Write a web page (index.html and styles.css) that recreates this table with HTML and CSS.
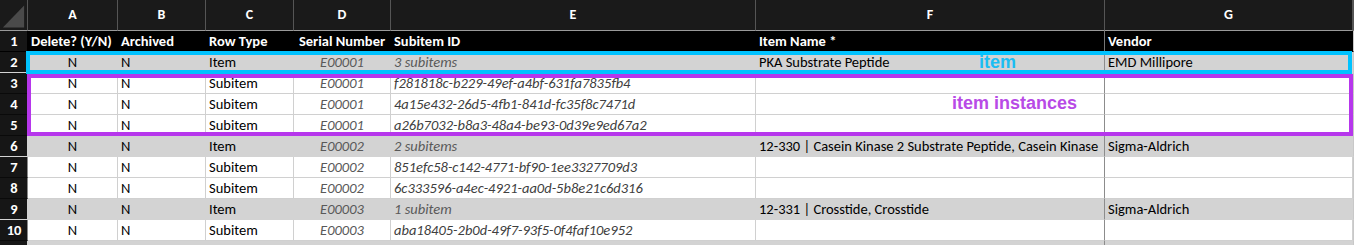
FILE: index.html
```html
<!DOCTYPE html>
<html lang="en">
<head>
<meta charset="utf-8">
<title>Sheet</title>
<link rel="stylesheet" href="styles.css">
</head>
<body>
<div class="sheet">
  <div class="row colhead">
    <div class="corner"><svg width="28" height="31" viewBox="0 0 28 31"><polygon points="3,28 25,28 25,5" fill="#4a4a4a"/></svg></div>
    <div class="ch">A</div><div class="ch">B</div><div class="ch">C</div><div class="ch">D</div><div class="ch">E</div><div class="ch">F</div><div class="ch fg">G</div><div class="ch end"></div>
  </div>
  <div class="row labels">
    <div class="rh">1</div>
    <div class="c">Delete? (Y/N)</div><div class="c">Archived</div><div class="c">Row Type</div><div class="c ctr">Serial Number</div><div class="c">Subitem ID</div><div class="c fcol">Item Name *</div><div class="c">Vendor</div><div class="c end"></div>
  </div>
  <div class="row item">
    <div class="rh">2</div>
    <div class="c ctr">N</div><div class="c">N</div><div class="c">Item</div><div class="c ctr serial">E00001</div><div class="c sub">3 subitems</div><div class="c fcol">PKA Substrate Peptide</div><div class="c">EMD Millipore</div><div class="c end"></div>
  </div>
  <div class="row">
    <div class="rh">3</div>
    <div class="c ctr">N</div><div class="c">N</div><div class="c">Subitem</div><div class="c ctr serial">E00001</div><div class="c uuid">f281818c-b229-49ef-a4bf-631fa7835fb4</div><div class="c fcol"></div><div class="c"></div><div class="c end"></div>
  </div>
  <div class="row">
    <div class="rh">4</div>
    <div class="c ctr">N</div><div class="c">N</div><div class="c">Subitem</div><div class="c ctr serial">E00001</div><div class="c uuid">4a15e432-26d5-4fb1-841d-fc35f8c7471d</div><div class="c fcol"></div><div class="c"></div><div class="c end"></div>
  </div>
  <div class="row">
    <div class="rh">5</div>
    <div class="c ctr">N</div><div class="c">N</div><div class="c">Subitem</div><div class="c ctr serial">E00001</div><div class="c uuid">a26b7032-b8a3-48a4-be93-0d39e9ed67a2</div><div class="c fcol"></div><div class="c"></div><div class="c end"></div>
  </div>
  <div class="row item">
    <div class="rh">6</div>
    <div class="c ctr">N</div><div class="c">N</div><div class="c">Item</div><div class="c ctr serial">E00002</div><div class="c sub">2 subitems</div><div class="c fcol">12-330 | Casein Kinase 2 Substrate Peptide, Casein Kinase</div><div class="c">Sigma-Aldrich</div><div class="c end"></div>
  </div>
  <div class="row">
    <div class="rh">7</div>
    <div class="c ctr">N</div><div class="c">N</div><div class="c">Subitem</div><div class="c ctr serial">E00002</div><div class="c uuid">851efc58-c142-4771-bf90-1ee3327709d3</div><div class="c fcol"></div><div class="c"></div><div class="c end"></div>
  </div>
  <div class="row">
    <div class="rh">8</div>
    <div class="c ctr">N</div><div class="c">N</div><div class="c">Subitem</div><div class="c ctr serial">E00002</div><div class="c uuid">6c333596-a4ec-4921-aa0d-5b8e21c6d316</div><div class="c fcol"></div><div class="c"></div><div class="c end"></div>
  </div>
  <div class="row item">
    <div class="rh">9</div>
    <div class="c ctr">N</div><div class="c">N</div><div class="c">Item</div><div class="c ctr serial">E00003</div><div class="c sub">1 subitem</div><div class="c fcol">12-331 | Crosstide, Crosstide</div><div class="c">Sigma-Aldrich</div><div class="c end"></div>
  </div>
  <div class="row">
    <div class="rh">10</div>
    <div class="c ctr">N</div><div class="c">N</div><div class="c">Subitem</div><div class="c ctr serial">E00003</div><div class="c uuid">aba18405-2b0d-49f7-93f5-0f4faf10e952</div><div class="c fcol"></div><div class="c"></div><div class="c end"></div>
  </div>
  <div class="row item">
    <div class="rh"></div>
    <div class="c"></div><div class="c"></div><div class="c"></div><div class="c"></div><div class="c"></div><div class="c fcol"></div><div class="c"></div><div class="c end"></div>
  </div>

  <div class="box box-item"></div>
  <div class="box box-inst"></div>
  <span class="tag tag-item">item</span>
  <span class="tag tag-inst">item instances</span>
</div>
</body>
</html>
```
FILE: styles.css
```css
html, body {
  margin: 0;
  padding: 0;
  background: #d3d3d3;
  overflow: hidden;
}

.sheet {
  position: relative;
  width: 1354px;
  height: 245px;
  overflow: hidden;
  font-family: Carlito, Lato, "Liberation Sans", sans-serif;
  font-size: 14.5px;
  color: #000;
}

.row {
  display: grid;
  grid-template-columns: 28px 90px 88px 88px 97px 365px 349px 248px 1fr;
  height: 21px;
  background: #fff;
}

.row > div {
  box-sizing: border-box;
  border-right: 1px solid #d0d0d0;
  border-bottom: 1px solid #d0d0d0;
  overflow: hidden;
  white-space: nowrap;
  line-height: 21px;
}

.row.item {
  background: #d3d3d3;
}

.row.item > div {
  border-color: #d3d3d3;
}

/* column header row */
.row.colhead {
  height: 31px;
  background: #1a1a1a;
}

.row.colhead > div {
  border-right: 1px solid #555;
  border-bottom: 1px solid #9a9a9a;
  line-height: 30px;
  color: #fff;
  font-weight: bold;
  font-size: 14px;
  text-align: center;
}

.corner {
  display: flex;
  background: #1a1a1a;
}

.corner svg {
  display: block;
}

/* field label row */
.row.labels {
  background: #000;
}

.row.labels > div {
  border-color: #000;
  color: #fff;
  font-weight: bold;
}

.row.labels > .c.fcol {
  border-right-color: #777;
}

/* row headers */
.row > .rh {
  background: #161616;
  color: #fff;
  font-weight: bold;
  text-align: center;
  border-right: 1px solid #8a8a8a;
  border-bottom: 1px solid #0a0a0a;
  padding-left: 1px;
}

.c {
  padding: 0 3px;
}

.ctr {
  text-align: center;
}

.serial {
  font-style: italic;
  color: #595959;
}

.sub {
  font-style: italic;
  color: #595959;
}

.uuid {
  font-style: italic;
  color: #404040;
}

.row > .c.fcol,
.row.item > .c.fcol {
  border-right-color: #8c8c8c;
  text-overflow: clip;
}

.row > .c.end {
  border-right: 0;
  border-left: 1px solid #c8c8c8;
}

/* annotation overlays */
.box {
  position: absolute;
  box-sizing: border-box;
  border: 4px solid;
  pointer-events: none;
}

.box-item {
  left: 26px;
  top: 51px;
  width: 1326px;
  height: 23px;
  border-color: #00c2ff;
}

.box-inst {
  left: 27px;
  top: 74px;
  width: 1326px;
  height: 62px;
  border-color: #b636ec;
}

.tag {
  position: absolute;
  font-family: "Liberation Sans", Arial, sans-serif;
  font-weight: bold;
  font-size: 18px;
  line-height: 20px;
  white-space: nowrap;
}

.tag-item {
  left: 979px;
  top: 52px;
  color: #1bbdf3;
}

.tag-inst {
  left: 952px;
  top: 93px;
  color: #b84ae6;
}
```
